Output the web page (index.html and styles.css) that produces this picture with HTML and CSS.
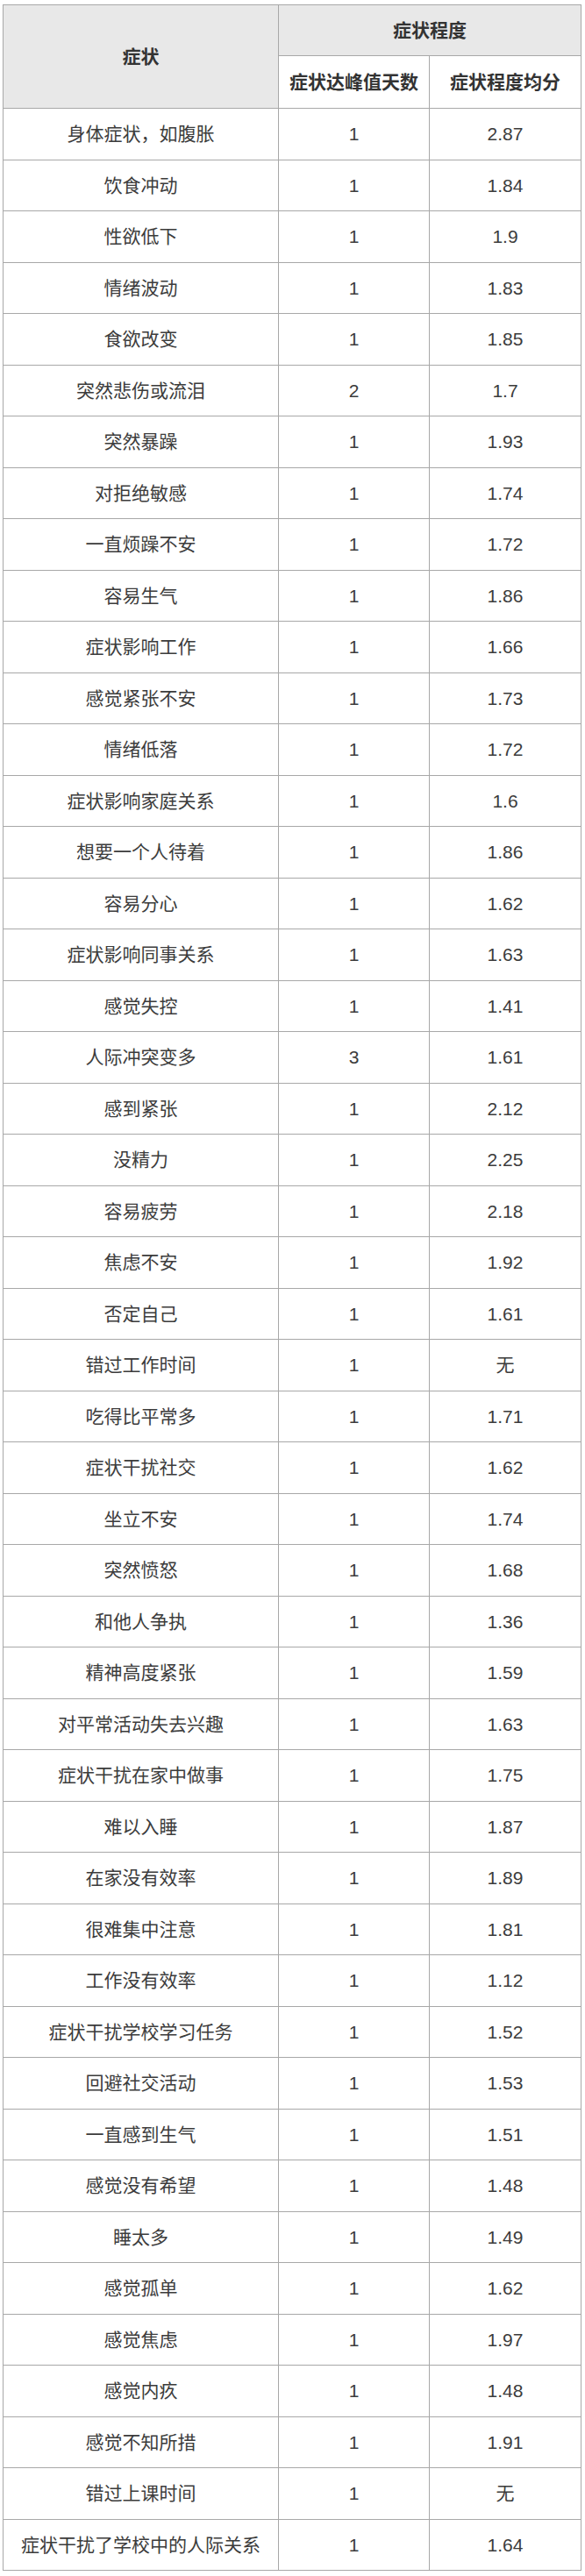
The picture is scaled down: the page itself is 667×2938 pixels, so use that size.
FILE: index.html
```html
<!DOCTYPE html>
<html lang="zh">
<head>
<meta charset="utf-8">
<link rel="stylesheet" href="styles.css">
</head>
<body>
<table class="sym">
<colgroup><col class="c1"><col class="c2"><col class="c3"></colgroup>
<thead>
<tr class="h1"><th rowspan="2">症状</th><th colspan="2">症状程度</th></tr>
<tr class="h2"><th class="sub">症状达峰值天数</th><th class="sub">症状程度均分</th></tr>
</thead>
<tbody>
<tr><td>身体症状，如腹胀</td><td>1</td><td>2.87</td></tr>
<tr><td>饮食冲动</td><td>1</td><td>1.84</td></tr>
<tr><td>性欲低下</td><td>1</td><td>1.9</td></tr>
<tr><td>情绪波动</td><td>1</td><td>1.83</td></tr>
<tr><td>食欲改变</td><td>1</td><td>1.85</td></tr>
<tr><td>突然悲伤或流泪</td><td>2</td><td>1.7</td></tr>
<tr><td>突然暴躁</td><td>1</td><td>1.93</td></tr>
<tr><td>对拒绝敏感</td><td>1</td><td>1.74</td></tr>
<tr><td>一直烦躁不安</td><td>1</td><td>1.72</td></tr>
<tr><td>容易生气</td><td>1</td><td>1.86</td></tr>
<tr><td>症状影响工作</td><td>1</td><td>1.66</td></tr>
<tr><td>感觉紧张不安</td><td>1</td><td>1.73</td></tr>
<tr><td>情绪低落</td><td>1</td><td>1.72</td></tr>
<tr><td>症状影响家庭关系</td><td>1</td><td>1.6</td></tr>
<tr><td>想要一个人待着</td><td>1</td><td>1.86</td></tr>
<tr><td>容易分心</td><td>1</td><td>1.62</td></tr>
<tr><td>症状影响同事关系</td><td>1</td><td>1.63</td></tr>
<tr><td>感觉失控</td><td>1</td><td>1.41</td></tr>
<tr><td>人际冲突变多</td><td>3</td><td>1.61</td></tr>
<tr><td>感到紧张</td><td>1</td><td>2.12</td></tr>
<tr><td>没精力</td><td>1</td><td>2.25</td></tr>
<tr><td>容易疲劳</td><td>1</td><td>2.18</td></tr>
<tr><td>焦虑不安</td><td>1</td><td>1.92</td></tr>
<tr><td>否定自己</td><td>1</td><td>1.61</td></tr>
<tr><td>错过工作时间</td><td>1</td><td>无</td></tr>
<tr><td>吃得比平常多</td><td>1</td><td>1.71</td></tr>
<tr><td>症状干扰社交</td><td>1</td><td>1.62</td></tr>
<tr><td>坐立不安</td><td>1</td><td>1.74</td></tr>
<tr><td>突然愤怒</td><td>1</td><td>1.68</td></tr>
<tr><td>和他人争执</td><td>1</td><td>1.36</td></tr>
<tr><td>精神高度紧张</td><td>1</td><td>1.59</td></tr>
<tr><td>对平常活动失去兴趣</td><td>1</td><td>1.63</td></tr>
<tr><td>症状干扰在家中做事</td><td>1</td><td>1.75</td></tr>
<tr><td>难以入睡</td><td>1</td><td>1.87</td></tr>
<tr><td>在家没有效率</td><td>1</td><td>1.89</td></tr>
<tr><td>很难集中注意</td><td>1</td><td>1.81</td></tr>
<tr><td>工作没有效率</td><td>1</td><td>1.12</td></tr>
<tr><td>症状干扰学校学习任务</td><td>1</td><td>1.52</td></tr>
<tr><td>回避社交活动</td><td>1</td><td>1.53</td></tr>
<tr><td>一直感到生气</td><td>1</td><td>1.51</td></tr>
<tr><td>感觉没有希望</td><td>1</td><td>1.48</td></tr>
<tr><td>睡太多</td><td>1</td><td>1.49</td></tr>
<tr><td>感觉孤单</td><td>1</td><td>1.62</td></tr>
<tr><td>感觉焦虑</td><td>1</td><td>1.97</td></tr>
<tr><td>感觉内疚</td><td>1</td><td>1.48</td></tr>
<tr><td>感觉不知所措</td><td>1</td><td>1.91</td></tr>
<tr><td>错过上课时间</td><td>1</td><td>无</td></tr>
<tr><td>症状干扰了学校中的人际关系</td><td>1</td><td>1.64</td></tr>
</tbody>
</table>
</body>
</html>
```
FILE: styles.css
```css
html, body {
  margin: 0;
  padding: 0;
  background: #ffffff;
}
body {
  padding: 5px 0 0 3px;
  font-family: "Liberation Sans", "Noto Sans CJK SC", sans-serif;
  color: #3c3c3c;
}
.sym {
  border-collapse: collapse;
  width: 659px;
  table-layout: fixed;
  font-size: 21px;
}
.c1 { width: 314px; }
.c2 { width: 172px; }
.c3 { width: 173px; }
.sym th, .sym td {
  border: 1px solid #a8a8a8;
  text-align: center;
  vertical-align: middle;
  padding: 0 4px;
  line-height: 1.2;
}
.sym th {
  background: #e8e8e8;
  font-weight: bold;
  color: #333333;
}
.sym th.sub {
  background: #ffffff;
}
.h1 th { height: 57px; }
.h2 th { height: 59px; }
.sym td {
  height: 57.5px;
}
```
